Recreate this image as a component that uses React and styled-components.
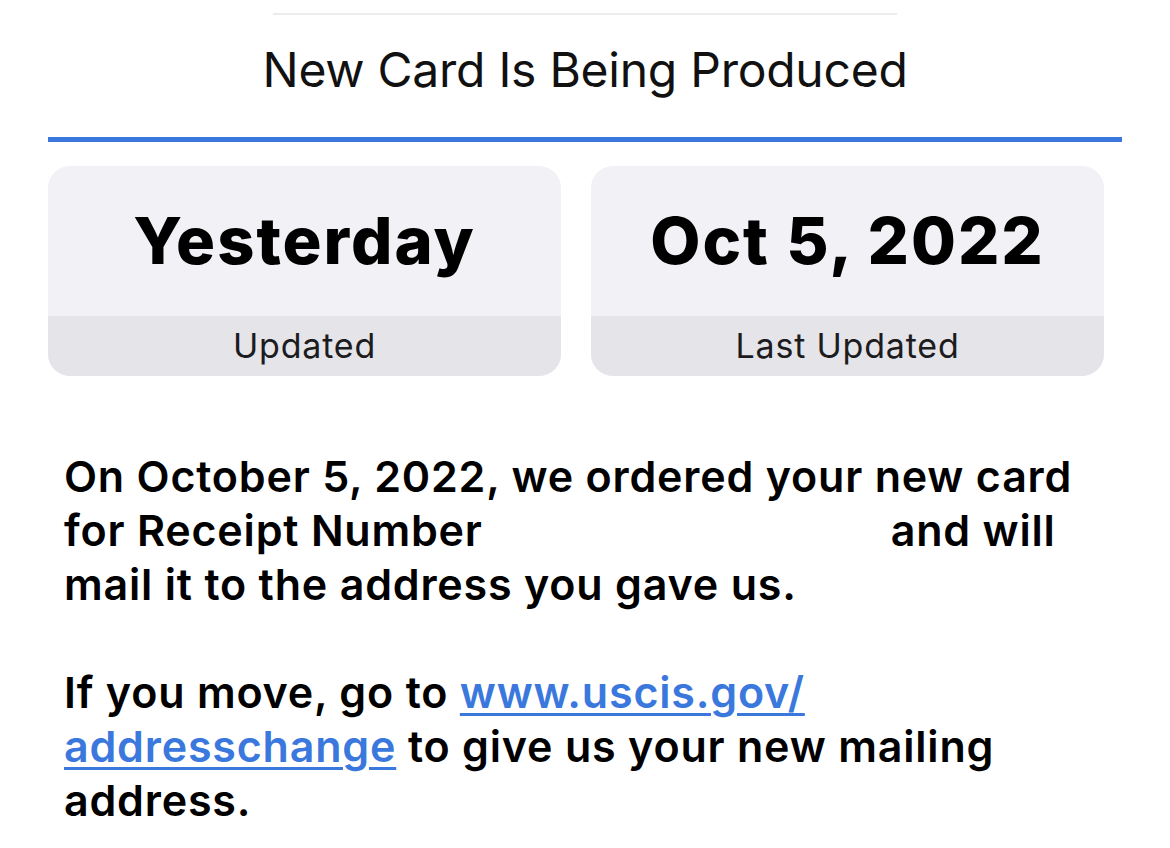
import React from "react";
import styled, { createGlobalStyle } from "styled-components";

const Global = createGlobalStyle`
  html, body { margin: 0; padding: 0; background: #ffffff; }
  body { font-family: Inter, "Noto Sans", sans-serif; color: #000; -webkit-font-smoothing: antialiased; }
`;

const Page = styled.div`
  width: 1170px;
  height: 848px;
  overflow: hidden;
  display: flex;
  flex-direction: column;
  align-items: stretch;
  padding: 0 48px;
  box-sizing: border-box;
`;

const Grabber = styled.div`
  align-self: center;
  width: 624px;
  height: 2px;
  margin-top: 13px;
  background: #ececef;
`;

const Title = styled.h1`
  margin: 0;
  margin-top: 28px;
  height: 54px;
  text-align: center;
  font-size: 48px;
  line-height: 54px;
  font-weight: 400;
  letter-spacing: -0.25px;
  color: #111;
`;

const Progress = styled.div`
  margin-top: 40px;
  height: 5px;
  width: 1074px;
  background: #3b78dd;
`;

const Cards = styled.div`
  margin-top: 24px;
  display: grid;
  grid-template-columns: 513px 513px;
  column-gap: 30px;
`;

const Card = styled.div`
  height: 210px;
  border-radius: 22px;
  overflow: hidden;
  background: #f1f1f6;
  display: flex;
  flex-direction: column;
`;

const CardValue = styled.div`
  flex: 1;
  display: flex;
  align-items: center;
  justify-content: center;
  font-size: 65px;
  font-weight: 800;
  letter-spacing: 2px;
  color: #000;
  padding-bottom: 2px;
`;

const CardLabel = styled.div`
  height: 60px;
  background: #e4e4e9;
  display: flex;
  align-items: center;
  justify-content: center;
  font-size: 34px;
  font-weight: 400;
  letter-spacing: 0.8px;
  color: #1c1c1e;
  padding-bottom: 2px;
  box-sizing: border-box;
`;

const Body = styled.div`
  margin-top: 73px;
  padding-left: 16px;
  display: flex;
  flex-direction: column;
  gap: 54px;
`;

const Para = styled.p`
  margin: 0;
  font-size: 43px;
  line-height: 54px;
  font-weight: 600;
  letter-spacing: 0.8px;
  white-space: nowrap;
  color: #000;
`;

const Redacted = styled.span`
  display: inline-block;
  width: 408px;
`;

const Link = styled.a`
  color: #3b78dd;
  text-decoration: underline;
  text-decoration-thickness: 3px;
  text-underline-offset: 5px;
`;

export default function App() {
  return (
    <>
      <Global />
      <Page>
        <Grabber />
        <Title>New Card Is Being Produced</Title>
        <Progress />
        <Cards>
          <Card>
            <CardValue>Yesterday</CardValue>
            <CardLabel>Updated</CardLabel>
          </Card>
          <Card>
            <CardValue>Oct 5, 2022</CardValue>
            <CardLabel>Last Updated</CardLabel>
          </Card>
        </Cards>
        <Body>
          <Para>
            On October 5, 2022, we ordered your new card
            <br />
            for Receipt Number<Redacted />and will
            <br />
            mail it to the address you gave us.
          </Para>
          <Para>
            If you move, go to <Link href="#">www.uscis.gov/</Link>
            <br />
            <Link href="#">addresschange</Link> to give us your new mailing
            <br />
            address.
          </Para>
        </Body>
      </Page>
    </>
  );
}
